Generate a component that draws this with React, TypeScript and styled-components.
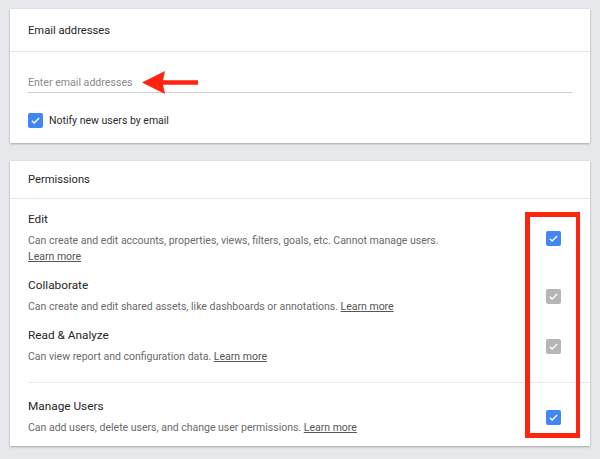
import React from 'react';
import styled, { createGlobalStyle } from 'styled-components';

const GlobalStyle = createGlobalStyle`
  html, body {
    margin: 0;
    padding: 0;
    background: #e7e8eb;
  }
  body {
    font-family: Roboto, 'Liberation Sans', Arial, sans-serif;
    color: #212121;
  }
`;

const Page = styled.div`
  width: 600px;
  height: 459px;
  box-sizing: border-box;
  padding: 9px 10px 0 10px;
  display: flex;
  flex-direction: column;
  gap: 18px;
`;

const Card = styled.section`
  position: relative;
  background: #fff;
  box-shadow: 0 1px 2px rgba(0, 0, 0, 0.28), 0 0 1px rgba(0, 0, 0, 0.08);
`;

const CardHeader = styled.div<{ $h: number }>`
  height: ${({ $h }) => $h}px;
  display: flex;
  align-items: center;
  padding: 0 18px;
  border-bottom: 1px solid #e6e6e6;
  font-size: 11.2px;
  color: #262626;
`;

const EmailBody = styled.div`
  padding: 23px 18px 15px 18px;
  display: flex;
  flex-direction: column;
  gap: 20px;
`;

const InputField = styled.div`
  padding-bottom: 1px;
  line-height: 16px;
  font-size: 10.6px;
  color: #8a8a8a;
  border-bottom: 1.5px solid #cfcfcf;
`;

const CheckRow = styled.label`
  display: flex;
  align-items: center;
  gap: 6px;
  font-size: 10.5px;
  color: #2b2b2b;
`;

const Box = styled.span<{ $on: boolean }>`
  flex: none;
  width: 15px;
  height: 15px;
  border-radius: 2px;
  background: ${({ $on }) => ($on ? '#4285f4' : '#b6b6b6')};
  display: flex;
  align-items: center;
  justify-content: center;
`;

const PermBody = styled.div`
  padding: 12px 0 10px 18px;
  display: flex;
  flex-direction: column;
`;

const Group = styled.div`
  display: flex;
  flex-direction: column;
  gap: 12px;
  padding-right: 29px;
`;

const Divider = styled.div`
  height: 1px;
  background: #e8e8e8;
  margin: 17px 0 15px 0;
`;

const Row = styled.div`
  display: flex;
  align-items: center;
  justify-content: space-between;
`;

const RowText = styled.div`
  display: flex;
  flex-direction: column;
`;

const Title = styled.div`
  font-size: 11.8px;
  line-height: 16px;
  color: #262626;
  margin-bottom: 6px;
`;

const Desc = styled.div`
  font-size: 10.5px;
  line-height: 16px;
  color: #6a6a6a;
`;

const More = styled.a`
  color: #555;
  text-decoration: underline;
  text-underline-offset: 1px;
`;

const Arrow = styled.svg`
  position: absolute;
  left: 131px;
  top: 61px;
`;

const Highlight = styled.div`
  position: absolute;
  left: 515px;
  top: 51px;
  width: 55px;
  height: 226px;
  box-sizing: border-box;
  border: 5px solid #ff2410;
  border-right-width: 4.5px;
  pointer-events: none;
`;

const Check = ({ on }: { on: boolean }) => (
  <Box $on={on}>
    <svg width="11" height="11" viewBox="0 0 24 24">
      <path d="M4 12.5l5 5L20 6.5" fill="none" stroke="#fff" strokeWidth="2.8" />
    </svg>
  </Box>
);

const perms = [
  {
    title: 'Edit',
    desc: 'Can create and edit accounts, properties, views, filters, goals, etc. Cannot manage users.',
    breakLink: true,
    on: true,
  },
  {
    title: 'Collaborate',
    desc: 'Can create and edit shared assets, like dashboards or annotations.',
    on: false,
  },
  { title: 'Read & Analyze', desc: 'Can view report and configuration data.', on: false },
];

const Perm = ({ title, desc, on, breakLink }: { title: string; desc: string; on: boolean; breakLink?: boolean }) => (
  <Row>
    <RowText>
      <Title>{title}</Title>
      <Desc>
        {desc}
        {breakLink ? <br /> : ' '}
        <More>Learn more</More>
      </Desc>
    </RowText>
    <Check on={on} />
  </Row>
);

const App = () => {
  return (
    <>
      <GlobalStyle />
      <Page>
        <Card>
          <CardHeader $h={42}>Email addresses</CardHeader>
          <EmailBody>
            <InputField>Enter email addresses</InputField>
            <CheckRow>
              <Check on />
              Notify new users by email
            </CheckRow>
          </EmailBody>
          <Arrow width="58" height="25" viewBox="0 0 58 25">
            <polygon points="1,12.5 24,1 22,10.3 57,10.3 57,14.7 22,14.7 24,24" fill="#ff2410" />
          </Arrow>
        </Card>
        <Card>
          <CardHeader $h={37}>Permissions</CardHeader>
          <PermBody>
            <Group>
              {perms.map((p) => (
                <Perm key={p.title} {...p} />
              ))}
            </Group>
            <Divider />
            <Group>
              <Perm
                title="Manage Users"
                desc="Can add users, delete users, and change user permissions."
                on
              />
            </Group>
          </PermBody>
          <Highlight />
        </Card>
      </Page>
    </>
  );
};

export default App;
